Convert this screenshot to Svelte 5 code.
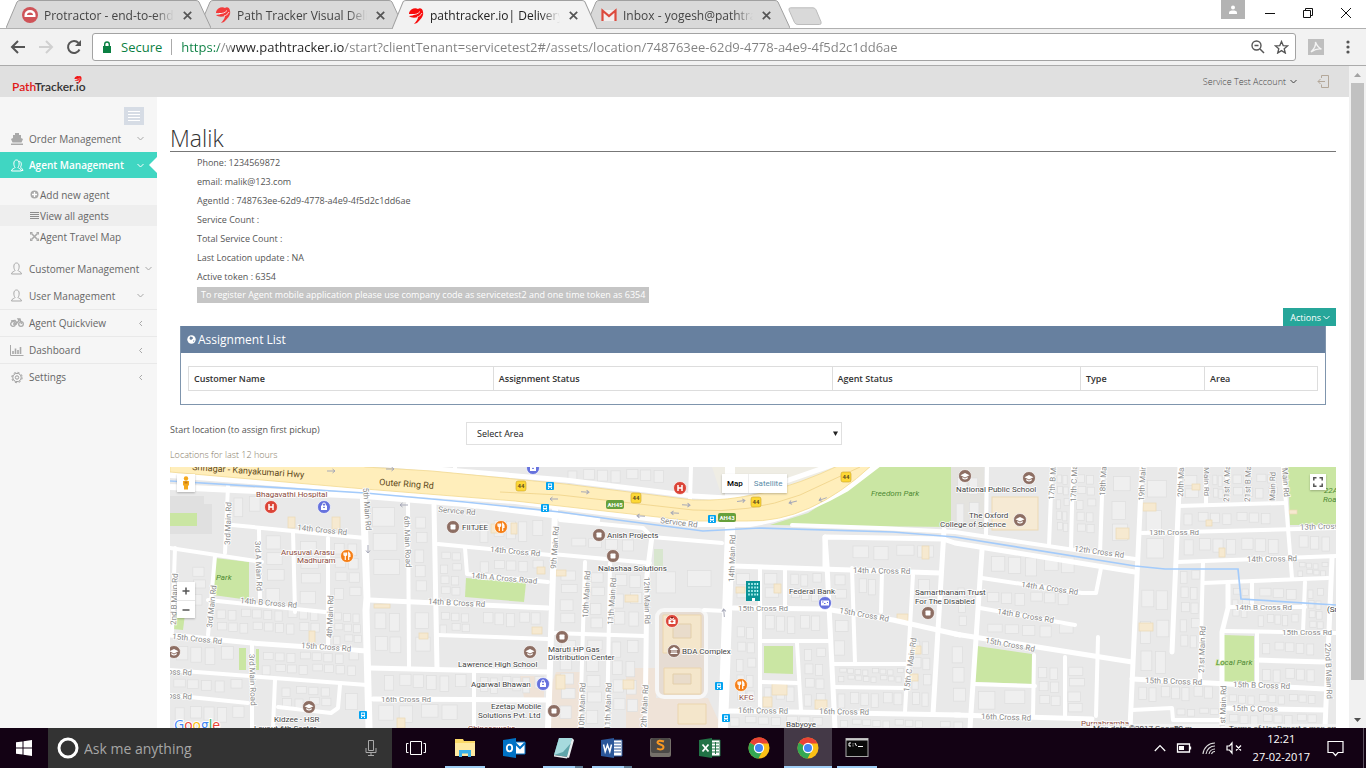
<script>
  const tabs = [
    { icon: 'protractor', title: 'Protractor - end-to-end testing' },
    { icon: 'path', title: 'Path Tracker Visual Delivery' },
    { icon: 'path', title: 'pathtracker.io| Delivery Planner', active: true },
    { icon: 'gmail', title: 'Inbox - yogesh@pathtracker.io' }
  ];

  const details = [
    'Phone: 1234569872',
    'email: malik@123.com',
    'AgentId : 748763ee-62d9-4778-a4e9-4f5d2c1dd6ae',
    'Service Count :',
    'Total Service Count :',
    'Last Location update : NA',
    'Active token : 6354'
  ];

  const columns = ['Customer Name', 'Assignment Status', 'Agent Status', 'Type', 'Area'];

  // Streets as [width, points]
  const roads = [
    [4, '228,486 225,553'], [4, '215,556 208,635'], [4, '232,525 365,538'], [4, '170,548 262,562'],
    [4, '175,548 172,632'], [4, '259,530 260,600'], [4, '293,531 295,612'], [4, '328,538 328,646'],
    [7, '363,486 367,598 366,610 369,728'], [4, '208,600 325,612'], [5, '170,635 252,643 367,651'],
    [4, '170,670 367,685'], [4, '170,695 248,703'], [4, '252,645 252,728'], [4, '275,680 273,728'],
    [4, '278,707 331,713 338,708 340,685'], [4, '408,503 409,667'], [5, '434,505 437,668'],
    [4, '438,544 550,555'], [4, '465,548 467,574 548,582'], [5, '369,600 548,608'], [4, '438,635 548,639'],
    [5, '370,668 548,672'], [5, '373,699 548,700'], [4, '474,673 474,728'], [6, '555,510 548,728'],
    [4, '455,467 455,474'], [4, '560,520 643,528 652,537 722,543'], [5, '652,536 647,575 645,728'],
    [4, '552,554 650,563'], [4, '585,562 580,728'], [4, '610,563 607,728'], [4, '552,633 645,636'],
    [4, '704,610 726,611'], [5, '733,566 940,573'], [4, '760,568 760,710'], [4, '785,568 785,608'],
    [5, '733,608 825,609 893,620 960,635'], [5, '825,569 825,537 943,539 955,543 1135,572'],
    [5, '825,537 827,565 835,728'], [4, '852,568 855,663'], [4, '882,572 881,612'], [4, '833,664 907,664'],
    [4, '833,687 907,688'], [4, '913,575 905,712'], [5, '944,530 933,714'], [5, '730,711 960,715'],
    [4, '760,641 828,641'], [4, '760,682 798,683'], [4, '797,643 801,711'],
    [4, '792,525 880,528 955,532 1135,559'], [4, '691,467 690,500'], [4, '987,467 986,535'],
    [4, '1052,467 1049,546'], [4, '1073,467 1071,548'], [4, '1103,467 1100,554'], [5, '1142,467 1130,728'],
    [5, '1180,467 1172,652'], [4, '1178,506 1285,503'], [4, '1206,467 1206,505'], [4, '1227,467 1227,478'],
    [4, '1283,467 1286,503 1292,578'], [4, '1142,533 1336,528'], [4, '1177,562 1336,556'],
    [4, '1203,562 1200,680'], [4, '1203,583 1328,578'], [5, '1332,558 1325,728'],
    [5, '1228,585 1228,608 1222,632 1222,728'], [4, '1228,607 1305,607'], [4, '1252,582 1252,603'],
    [4, '1305,582 1303,632'], [4, '1223,631 1336,633'], [4, '1257,633 1257,682'], [5, '1257,660 1325,662'],
    [5, '1132,679 1325,689'], [5, '1223,708 1325,710'], [4, '1132,710 1172,708 1173,720 1222,720'],
    [5, '982,550 970,728'], [4, '982,578 1082,593 1096,593 1101,568'], [4, '980,608 1075,625'],
    [5, '955,634 1132,662'], [4, '973,684 1035,686'], [4, '1034,655 1033,717'], [4, '1065,657 1065,718'],
    [4, '1098,637 1096,716'], [5, '955,715 1092,719']
  ];

  const parks = [
    '170,513 197,513 197,526 170,526', '215,558 249,562 249,600 213,595', '239,648 246,648 246,670 239,670',
    '256,649 259,649 259,670 256,670', '175,612 185,614 183,630 173,629', '466,578 526,583 524,602 465,597',
    '764,646 793,646 793,674 764,673', '870,467 951,467 951,527 770,525 808,513 845,489',
    '977,646 1032,654 1032,684 975,682', '1224,635 1254,636 1254,682 1224,682',
    '1288,467 1336,467 1336,525 1290,525'
  ];

  // Built-up blocks as [x, y, width, height, columns, rows]
  const blocks = [
    [234, 496, 28, 24, 2, 1], [266, 534, 22, 70, 1, 4], [300, 540, 24, 66, 1, 4], [334, 542, 28, 60, 2, 4],
    [192, 566, 16, 40, 1, 3], [216, 609, 106, 26, 9, 2], [333, 612, 30, 34, 3, 3], [175, 646, 60, 22, 4, 1],
    [262, 652, 98, 24, 8, 2], [172, 679, 72, 14, 5, 1], [282, 686, 52, 22, 4, 2], [175, 706, 70, 20, 5, 1],
    [345, 692, 18, 22, 1, 1], [372, 506, 32, 80, 1, 3], [415, 516, 14, 80, 1, 5], [374, 612, 30, 48, 2, 2],
    [414, 612, 18, 50, 1, 2], [440, 612, 32, 22, 3, 2], [482, 612, 60, 18, 5, 1], [440, 552, 22, 46, 2, 4],
    [480, 520, 64, 26, 5, 1], [480, 560, 64, 14, 5, 1], [384, 674, 84, 20, 6, 1], [480, 676, 64, 20, 6, 1],
    [378, 704, 84, 22, 4, 1], [560, 570, 20, 56, 1, 4], [590, 572, 16, 60, 1, 4], [614, 574, 30, 54, 2, 3],
    [560, 640, 18, 80, 1, 5], [586, 640, 18, 86, 1, 5], [612, 640, 28, 78, 2, 4], [656, 570, 60, 28, 2, 1],
    [736, 572, 20, 30, 1, 2], [764, 572, 18, 30, 1, 2], [790, 573, 32, 30, 3, 2], [834, 574, 14, 30, 1, 2],
    [858, 578, 20, 22, 2, 1], [764, 615, 58, 22, 5, 1], [834, 620, 16, 38, 1, 2], [838, 668, 66, 14, 8, 2],
    [838, 692, 66, 18, 6, 1], [764, 686, 32, 22, 3, 1], [804, 648, 22, 60, 2, 4], [918, 578, 16, 26, 1, 1],
    [912, 640, 20, 68, 2, 4], [852, 545, 86, 18, 4, 1], [736, 626, 20, 80, 2, 5], [990, 556, 88, 24, 5, 1],
    [986, 592, 86, 16, 6, 1], [986, 624, 90, 14, 5, 1], [958, 586, 10, 44, 1, 3], [952, 645, 16, 64, 1, 3],
    [978, 690, 50, 24, 2, 1], [1038, 666, 24, 44, 2, 3], [1068, 666, 20, 48, 1, 4], [1056, 474, 13, 60, 2, 5],
    [1076, 474, 20, 62, 2, 5], [1112, 476, 22, 70, 1, 3], [1146, 480, 24, 86, 1, 3], [1140, 590, 30, 90, 2, 3],
    [1184, 512, 90, 14, 7, 1], [1184, 538, 98, 20, 7, 1], [1180, 570, 20, 80, 2, 5], [1184, 474, 18, 28, 1, 2],
    [1212, 474, 12, 28, 2, 2], [1232, 474, 46, 26, 4, 2], [1298, 535, 36, 18, 3, 1], [1298, 562, 30, 14, 4, 2],
    [1232, 588, 18, 30, 2, 3], [1258, 588, 42, 14, 3, 1], [1308, 588, 16, 44, 2, 4], [1258, 614, 40, 14, 5, 1],
    [1262, 642, 56, 14, 5, 1], [1262, 668, 56, 16, 5, 1], [1138, 686, 76, 18, 7, 1], [1176, 708, 44, 9, 4, 1],
    [1228, 694, 90, 11, 9, 1], [1228, 714, 90, 12, 8, 1], [956, 477, 24, 50, 2, 2], [570, 538, 70, 14, 4, 1],
    [568, 469, 100, 16, 7, 1], [730, 716, 96, 11, 7, 1], [840, 719, 86, 9, 8, 1], [940, 720, 28, 8, 2, 1]
  ];

  const buildings = blocks.flatMap(([x, y, w, h, nx, ny], b) => {
    const out = [];
    for (let i = 0; i < nx; i++) {
      for (let j = 0; j < ny; j++) {
        const r = ((b * 31 + i * 17 + j * 23) % 10) / 10;
        const cw = w / nx;
        const ch = h / ny;
        out.push({ x: x + i * cw + r * 2, y: y + j * ch + (1 - r) * 2, w: Math.max(3, cw * (0.62 + r * 0.2)), h: Math.max(3, ch * (0.78 - r * 0.25)) });
      }
    }
    return out;
  });

  const shops = [
    [288, 517, 7, 11], [332, 517, 8, 12], [309, 631, 6, 12], [374, 604, 16, 4], [419, 633, 9, 6], [537, 567, 8, 7],
    [532, 627, 10, 7], [491, 524, 8, 9], [511, 523, 6, 11], [397, 718, 8, 10], [556, 570, 10, 6], [625, 595, 13, 7],
    [736, 587, 9, 6], [774, 584, 7, 9], [815, 700, 12, 9], [763, 697, 9, 10], [772, 684, 15, 11], [897, 614, 11, 7],
    [913, 646, 8, 8], [910, 674, 8, 7], [922, 546, 7, 13], [623, 680, 11, 9], [1143, 503, 13, 8], [1116, 528, 13, 11],
    [1139, 623, 14, 8], [1192, 484, 8, 6], [1206, 520, 6, 6], [1219, 548, 6, 9], [1289, 510, 8, 4], [556, 675, 9, 14]
  ];

  const streetNames = [
    [297, 530, 6, '14th Cross Rd'], [240, 603, 5, '14th B Cross Rd'], [172, 639, 6, '15th Cross Rd'],
    [301, 648, 4, '15th Cross Rd'], [230, 545, -88, '3rd Main Rd'], [255, 541, 88, '3rd A Main Rd'],
    [212, 628, -84, '3rd Main Rd'], [332, 638, -88, '4th Main Rd'], [249, 654, 88, '3rd Main Road'],
    [176, 625, -88, '2nd B Main Rd'], [363, 488, 86, '5th Main Rd'], [404, 516, 88, '6th Main Road'],
    [438, 512, 5, 'Service Rd'], [490, 552, 5, '14th Cross Rd'], [471, 578, 5, '14th A Cross Road'],
    [428, 604, 3, '14th B Cross Rd'], [381, 702, 0, '16th Cross Rd'], [165, 674, 3, 'ross Rd', 1],
    [165, 698, 3, 'ross Rd', 1], [556, 569, -86, '9th Main Rd'], [588, 618, -87, '10th Main Rd'],
    [613, 625, -86, '11th Main Rd'], [644, 577, 89, '12th Main Rd'], [584, 730, -88, '10th Main Rd'],
    [610, 730, -88, '11th Main Rd'], [646, 732, -87, '12th Main Rd'], [660, 523, 7, 'Service Rd'],
    [734, 582, -88, '14th Main Rd'], [738, 611, 0, '15th Cross Rd'], [839, 613, 10, '15th Cross Rd'],
    [853, 573, 1, '14th A Cross Rd'], [909, 692, -82, '15th C Main Rd'], [738, 713, 1, '16th Cross Rd'],
    [819, 714, 1, '16th Cross Rd'], [1054, 500, -86, '17th B Main Rd'], [1076, 502, -88, '17th C Main Rd'],
    [1105, 496, -87, '18th Main Rd'], [1144, 501, -87, '19th Main Rd'], [1183, 497, -88, '20th Main Rd'],
    [1204, 467, 90, 'Main Rd'], [1229, 502, -88, '21st A Main Rd'], [1250, 502, -88, '21st B Main Rd'],
    [1275, 501, -89, 'Main Rd'], [1282, 468, 86, 'Main Rd'], [1074, 551, 8, '12th Cross Rd'],
    [1021, 587, 8, '14th A Cross Rd'], [997, 614, 9, '14th B Cross Rd'], [985, 643, 10, '15th Cross Rd'],
    [1149, 535, 0, '13th Cross Rd'], [1247, 562, -1, '14th Cross Rd'], [1300, 530, -2, '13th Cross Rd'],
    [1235, 610, 0, '14th B Cross Rd'], [1282, 635, 0, '15th Cross Rd'], [1204, 673, -88, '21st Main Rd'],
    [1145, 683, 2, '15th B Cross Rd'], [1233, 687, 2, '15th B Cross Rd'], [1232, 711, 1, '15th C Cross'],
    [1325, 643, 88, '22nd B Main Rd'], [1225, 728, -88, '1st Main Rd'], [981, 719, 2, '16th Cross Rd']
  ];

  const places = [
    [256, 497, 'Bhagavathi Hospital', 'brown'], [281, 555, 'Arusuvai Arasu', 'brown'], [297, 563, 'Madhuram', 'brown'],
    [462, 530, 'FIITJEE'], [458, 667, 'Lawrence High School'], [471, 687, 'Agarwal Bhawan'], [491, 709, 'Ezetap Mobile'],
    [478, 718, 'Solutions Pvt. Ltd'], [274, 722, 'Kidzee - HSR'], [254, 731, 'Layout 6th Sector'], [548, 652, 'Maruti HP Gas'],
    [548, 660, 'Distribution Center'], [607, 538, 'Anish Projects'], [598, 571, 'Nalashaa Solutions'],
    [682, 654, 'BDA Complex'], [739, 700, 'KFC', 'brown'], [789, 594, 'Federal Bank'], [786, 727, 'Babyoye'],
    [915, 595, 'Samarthanam Trust'], [915, 604, 'For The Disabled'], [956, 492, 'National Public School'],
    [969, 518, 'The Oxford'], [940, 527, 'College of Science'], [1081, 726, 'Purnabramha', 'brown'],
    [1327, 612, '(Sri'], [216, 580, 'Park', 'green'], [871, 496, 'Freedom Park', 'green'],
    [1216, 665, 'Local Park', 'green'], [1324, 493, '22A', 'green'], [1323, 502, 'Road', 'green'],
    [468, 731, 'Chinesewoks', 'brown']
  ];

  const pins = [
    [271, 507, 'hospital'], [680, 488, 'hospital'], [672, 621, 'gift'], [324, 507, 'shop'], [533, 468, 'shop'],
    [543, 684, 'shop'], [825, 603, 'bank'], [347, 556, 'food'], [501, 527, 'food'], [741, 685, 'food'],
    [453, 527, 'dot'], [599, 535, 'dot'], [613, 556, 'dot'], [562, 637, 'dot'], [554, 711, 'dot'], [928, 613, 'dot'],
    [530, 652, 'school'], [174, 652, 'school'], [309, 707, 'school'], [965, 476, 'school'], [1029, 478, 'school'],
    [1020, 520, 'school'], [674, 651, 'museum']
  ];
  const pinColor = { hospital: '#db4437', gift: '#db4437', shop: '#6672dd', bank: '#6672dd', food: '#f57f17', dot: '#8d6e63', school: '#8d6e63', museum: '#8d6e63' };

  const buses = [[550, 486], [545, 508], [363, 715], [712, 519], [719, 686], [726, 718]];
  const shields = [[521, 486], [636, 498], [756, 502], [846, 477]];
  const highways = [[615, 505, 'AH45'], [727, 518, 'AH43']];
  const arrows = [[331, 471, 0], [390, 469, 0], [554, 499, 180], [585, 492, 3], [686, 505, 3], [675, 513, 183], [641, 516, 183], [741, 501, -8], [793, 502, 165], [823, 499, 160], [404, 505, 180], [368, 549, 90], [724, 613, -95]];

  const apps = [
    { id: 'explorer', name: 'File Explorer', open: true },
    { id: 'outlook', name: 'Outlook' },
    { id: 'notepad', name: 'Notepad', open: true, many: true },
    { id: 'word', name: 'Word', open: true, many: true },
    { id: 'sublime', name: 'Sublime Text' },
    { id: 'excel', name: 'Excel' },
    { id: 'chrome', name: 'Chrome' },
    { id: 'chrome', name: 'Chrome window', open: true, active: true },
    { id: 'cmd', name: 'Command Prompt', open: true }
  ];
</script>

{#snippet swoosh()}
  <path d="M1 5C2 1 7-1 10 1c2-2 5 0 5 3 1 4-2 7-6 11l-3 1c2-2 4-5 4-7C7 10 3 10 1 8c3 0 5-1 6-2H1z" fill="currentColor" />
  <path d="M4 6.500c3 .3 6-.5 8-3M9 9c2-.5 4-2 5-4" stroke="#fff" stroke-width="1" fill="none" opacity=".8" />
{/snippet}

{#snippet person()}
  <path d="M5 8.500C3.500 6.500 3 1 6.500 1s3 5.500 1.500 7.500c0 1 3.500 1 3.500 3.500H1.500C1.500 9.500 5 9.500 5 8.500z" fill="none" stroke="currentColor" />
{/snippet}

{#snippet chevron(left)}
  <svg class="chev" width="9" height="9" viewBox="0 0 9 9" aria-hidden="true"><path d={left ? 'M6 2L3.500 4.500L6 7' : 'M1.500 3L4.500 6L7.500 3'} fill="none" stroke="currentColor" /></svg>
{/snippet}

<div class="screen">
  <header class="tabstrip">
    {#each tabs as tab}
      <div class="tab" class:active={tab.active}>
        <svg class="tabshape" viewBox="0 0 205 28" preserveAspectRatio="none" aria-hidden="true"><path d="M0 28L11 2Q12 .5 14 .5H190Q192 .5 193 2L205 28" stroke="#a0a0a0" fill={tab.active ? '#f2f2f2' : '#d9d9d9'} /></svg>
        <svg class="favicon" width="16" height="16" viewBox="0 0 16 16" aria-hidden="true">
          {#if tab.icon === 'protractor'}
            <circle cx="8" cy="8" r="8" fill="#cf5358" /><path d="M2.500 10V8a5.500 5 0 0 1 11 0v2z" fill="#fff" /><path d="M5 8a3 2.500 0 0 1 6 0z" fill="#cf5358" />
          {:else if tab.icon === 'path'}
            <g color={tab.active ? '#f80c0c' : '#f23c3c'}>{@render swoosh()}</g>
          {:else}
            <path d="M1 3h14v11H1z" fill="#f3eeee" /><path d="M1.500 14V3.500L8 9l6.500-5.500V14" fill="none" stroke="#dd4b3e" stroke-width="2.200" />
          {/if}
        </svg>
        <span class="tabtitle">{tab.title}</span>
        <button class="tabclose" aria-label="Close tab"><svg width="9" height="9" viewBox="0 0 9 9"><path d="M.8.8l7.400 7.400M8.200.8L.8 8.200" stroke="#555" stroke-width="1.700" /></svg></button>
      </div>
    {/each}
    <button class="newtab" aria-label="New tab"><svg width="36" height="19" viewBox="0 0 36 19"><path d="M3.500.8H26q2 0 3 2l5 12q.8 2.700-1.500 2.700H11q-2.500 0-3.500-2L2 3Q1.500.8 3.500.8z" fill="#d9d9d9" stroke="#bcbcbc" /></svg></button>
    <div class="winctl">
      <button class="profile" aria-label="Profile"><svg width="10" height="10" viewBox="0 0 10 10"><circle cx="5" cy="2.500" r="2" fill="#fff" /><path d="M1 9V7.500C1 6 3 5.500 5 5.500s4 .5 4 2V9z" fill="#fff" /></svg></button>
      <button aria-label="Minimize"><svg width="12" height="12" viewBox="0 0 12 12"><path d="M1 6.500h10" stroke="#111" /></svg></button>
      <button aria-label="Restore"><svg width="12" height="12" viewBox="0 0 12 12"><path d="M1.500 3.500h7v7h-7zM3.500 3.500v-2h7v7h-2" fill="none" stroke="#111" /></svg></button>
      <button aria-label="Close window"><svg width="12" height="12" viewBox="0 0 12 12"><path d="M1 1l10 10M11 1L1 11" stroke="#111" /></svg></button>
    </div>
  </header>

  <div class="toolbar">
    <button aria-label="Back"><svg width="16" height="16" viewBox="0 0 16 16"><path d="M15 8H2.500M8 2L2 8l6 6" fill="none" stroke="#555" stroke-width="2" /></svg></button>
    <button aria-label="Forward"><svg width="16" height="16" viewBox="0 0 16 16"><path d="M1 8h12.500M8 2l6 6-6 6" fill="none" stroke="#d0d0d0" stroke-width="2" /></svg></button>
    <button aria-label="Reload"><svg width="16" height="16" viewBox="0 0 16 16"><path d="M13.500 10.500A6 6 0 1 1 12.500 4" fill="none" stroke="#555" stroke-width="2" /><path d="M15 1v6H9z" fill="#555" /></svg></button>
    <div class="omnibox">
      <svg width="10" height="13" viewBox="0 0 10 13" aria-hidden="true"><rect x="1" y="5" width="8" height="7" fill="#0b8043" /><path d="M2.700 5.500V3.200a2.300 2.200 0 0 1 4.600 0v2.300" fill="none" stroke="#0b8043" stroke-width="1.400" /></svg>
      <span class="secure">Secure</span>
      <input class="url" aria-label="Address" value="https://www.pathtracker.io/start?clientTenant=servicetest2#/assets/location/748763ee-62d9-4778-a4e9-4f5d2c1dd6ae" />
      <button aria-label="Zoom"><svg width="14" height="14" viewBox="0 0 14 14"><circle cx="5.500" cy="5.500" r="4.500" fill="none" stroke="#555" stroke-width="1.400" /><path d="M3.500 5.500h4M9 9l4 4" stroke="#555" stroke-width="1.500" /></svg></button>
      <button aria-label="Bookmark"><svg width="15" height="14" viewBox="0 0 15 14"><path d="M7.500 1.500l1.700 4.100 4.400.3-3.400 2.800 1.100 4.300-3.800-2.400L3.700 13l1.100-4.300L1.400 5.900l4.400-.3z" fill="none" stroke="#555" stroke-width="1.300" /></svg></button>
    </div>
    <button aria-label="PDF extension"><svg width="16" height="16" viewBox="0 0 16 16"><rect width="16" height="16" fill="#bfbfbf" /><path d="M3 13C6 10 8 6 7.500 3c1.500 4 3 6 6 7-4-.8-7 .5-10.500 3z" fill="none" stroke="#f4f4f4" stroke-width="1.300" /></svg></button>
    <button class="menu" aria-label="Menu"><svg width="4" height="14" viewBox="0 0 4 14"><g fill="#555"><circle cx="2" cy="2" r="1.600" /><circle cx="2" cy="7" r="1.600" /><circle cx="2" cy="12" r="1.600" /></g></svg></button>
  </div>

  <div class="viewport">
    <div class="page">
      <div class="topbar">
        <a class="brand" href="#home" aria-label="PathTracker.io home">
          <span><b>Path</b>Tracker.io</span>
          <svg class="brandmark" width="8" height="8" viewBox="0 0 16 16" color="#f01515" aria-hidden="true">{@render swoosh()}</svg>
        </a>
        <button class="account">Service Test Account {@render chevron(false)}</button>
        <button class="logout" aria-label="Log out"><svg width="12" height="13" viewBox="0 0 12 13"><path d="M4.500 3V.5h7v12h-7V9.500M8 6.500H1M3.500 4L1 6.500 3.500 9" fill="none" stroke="#b3a799" /></svg></button>
      </div>
      <div class="columns">
        <nav class="sidebar">
          <button class="toggle" aria-label="Toggle sidebar"><svg width="12" height="10" viewBox="0 0 12 10"><path d="M0 .5h12M0 3.500h12M0 6.500h12M0 9.500h12" stroke="#fff" /></svg></button>
          <a class="item" href="#orders">
            <svg width="14" height="12" viewBox="0 0 14 12" aria-hidden="true"><path d="M5 0h4v2h2v3l2 1-1.500 3.500h-9L1 6l2-1V2h2zM1 10.500h12V12H1z" fill="#a9a9a9" /></svg>
            <span>Order Management</span>{@render chevron(false)}
          </a>
          <a class="item current" href="#agents">
            <svg width="14" height="13" viewBox="0 0 14 13" aria-hidden="true">{@render person()}<path d="M8.500 2.500c3-1 3.500 3.500 2 5.500 0 1 2 1 2.500 3.500h-2" fill="none" stroke="currentColor" /></svg>
            <span>Agent Management</span>{@render chevron(false)}
          </a>
          <div class="submenu">
            <a href="#add"><svg width="9" height="9" viewBox="0 0 9 9" aria-hidden="true"><circle cx="4.500" cy="4.500" r="4" fill="#a9a9a9" /><path d="M4.500 2v5M2 4.500h5" stroke="#fff" stroke-width="1.300" /></svg><span>Add new agent</span></a>
            <a href="#view" class="hover"><svg width="9" height="9" viewBox="0 0 9 9" aria-hidden="true"><path d="M0 1.500h9M0 3.500h9M0 5.500h9M0 7.500h9" stroke="#8d8d8d" /></svg><span>View all agents</span></a>
            <a href="#travel"><svg width="9" height="9" viewBox="0 0 9 9" aria-hidden="true"><path d="M1.500 1.500l6 6M7.500 1.500l-6 6" stroke="#a9a9a9" stroke-width="1.600" /><path d="M0 0h3L0 3zM9 0v3L6 0zM0 9V6l3 3zM9 9H6l3-3z" fill="#a9a9a9" /></svg><span>Agent Travel Map</span></a>
          </div>
          <a class="item" href="#customers">
            <svg width="14" height="13" viewBox="0 0 14 13" aria-hidden="true">{@render person()}</svg>
            <span>Customer Management</span>{@render chevron(false)}
          </a>
          <a class="item" href="#users">
            <svg width="14" height="13" viewBox="0 0 14 13" aria-hidden="true">{@render person()}</svg>
            <span>User Management</span>{@render chevron(false)}
          </a>
          <a class="item ruled" href="#quick">
            <svg width="14" height="10" viewBox="0 0 14 10" aria-hidden="true"><g fill="none" stroke="#a9a9a9" stroke-width="1.300"><circle cx="3" cy="6" r="2.300" /><circle cx="11" cy="6" r="2.300" /><path d="M1 3l4-.5 2 2.500 2-2.500L8 1h2l1.500 5M3 6h4" /></g></svg>
            <span>Agent Quickview</span>{@render chevron(true)}
          </a>
          <a class="item ruled" href="#dashboard">
            <svg width="14" height="11" viewBox="0 0 14 11" aria-hidden="true"><path d="M.5 0v10.500H13.500" fill="none" stroke="#a9a9a9" /><path d="M3 9V6M5.500 9V3.500M8 9V5M10.500 9V2" stroke="#a9a9a9" stroke-width="1.600" /></svg>
            <span>Dashboard</span>{@render chevron(true)}
          </a>
          <a class="item ruled" href="#settings">
            <svg width="14" height="13" viewBox="0 0 14 13" aria-hidden="true"><g fill="none" stroke="#9c9c9c"><circle cx="7" cy="6.500" r="4.200" /><circle cx="7" cy="6.500" r="1.700" /><circle cx="7" cy="6.500" r="5.200" stroke-dasharray="2 2.080" /></g></svg>
            <span>Settings</span>{@render chevron(true)}
          </a>
        </nav>

        <main>
          <h1>Malik</h1>
          <ul class="details">
            {#each details as line}<li>{line}</li>{/each}
          </ul>
          <p class="note">To register Agent mobile application please use company code as servicetest2 and one time token as 6354</p>
          <div class="actions"><button>Actions {@render chevron(false)}</button></div>
          <section class="panel">
            <h2>
              <svg width="9" height="9" viewBox="0 0 9 9" aria-hidden="true"><circle cx="4.500" cy="4.500" r="4.200" fill="#fff" /><path d="M3 1.500l2.500.5.5 1.500-2 1.500-1.500-1zM6 5.500l1.500 0-1 1.500z" fill="#67809f" /></svg>
              Assignment List
            </h2>
            <table>
              <colgroup><col class="c1" /><col class="c2" /><col class="c3" /><col class="c4" /><col class="c5" /></colgroup>
              <thead><tr>{#each columns as c}<th scope="col">{c}</th>{/each}</tr></thead>
            </table>
          </section>
          <div class="startrow">
            <label for="area">Start location (to assign first pickup)</label>
            <div class="selectbox">
              <select id="area"><option>Select Area</option></select>
              <svg width="5" height="5" viewBox="0 0 5 5" aria-hidden="true"><path d="M0 .5h5L2.500 5z" fill="#222" /></svg>
            </div>
          </div>
          <p class="hours">Locations for last 12 hours</p>

          <div class="map">
            <svg class="canvas" viewBox="170 467 1166 261" preserveAspectRatio="xMinYMin slice" role="img" aria-label="Street map">
              <rect x="170" y="467" width="1166" height="300" fill="#e9e9e9" />
              <path d="M712 467h126q-50 36-98 33h-17z" fill="#efede4" />
              <path d="M948 467h36v62l-34-4z" fill="#e4e3df" />
              <path d="M170 496h34v8h8v30h-42z" fill="#e0e0e0" />
              <path d="M556 672h26v56h-36v-30zM626 668h30v30h52l14 30H626zM520 676h24v22h-20z" fill="#efe3d8" />
              {#each parks as p}<polygon points={p} fill="#cae6a3" />{/each}
              <rect x="654" y="549" width="9" height="17" fill="#d8e6cf" />
              {#each buildings as b}<rect x={b.x} y={b.y} width={b.w} height={b.h} fill="#efefef" stroke="#dedede" stroke-width=".7" />{/each}
              {#each shops as s}<rect x={s[0]} y={s[1]} width={s[2]} height={s[3]} fill="#f6e9d0" stroke="#ecd9b5" stroke-width=".7" />{/each}
              <rect x="992" y="497" width="46" height="33" fill="#f6ead4" stroke="#ecd9b5" />
              <rect x="657" y="610" width="49" height="87" rx="7" fill="#e6dcd3" stroke="#f7f7f7" stroke-width="4" />
              <path d="M663 615h38v38h-38zM664 668h37v26h-37zM678 704h28v20h-28z" fill="#f4e6cb" stroke="#ebd5ae" />
              <path d="M673 624h18v14h-18zM673 674h18v10h-18z" fill="#e9dccb" stroke="#e3cfaa" />
              {#each roads as r}<polyline points={r[1]} fill="none" stroke="#fff" stroke-width={r[0]} stroke-linecap="round" stroke-linejoin="round" />{/each}
              <path d="M170 487L365 496L465 504L560 516L600 521" stroke="#fff" stroke-width="6" fill="none" />
              <path d="M730 467V530L723 728" stroke="#fff" stroke-width="10" fill="none" />
              <path d="M365 463L565 480L693 496L727 498L780 483L838 463" fill="none" stroke="#fff" stroke-width="5" />
              <path d="M170 475L365 490L515 501L693 524L750 524Q800 516 846 489L880 463" fill="none" stroke="#fff" stroke-width="6" />
              <path d="M170 481L365 493L465 502L560 512L610 519L703 531L760 528L893 532L955 537L1135 566L1165 569H1238L1241 599L1336 605" fill="none" stroke="#a3cbfb" stroke-width="1.700" />
              <path d="M170 460H350L365 467L432 471L565 484L693 500Q760 503 840 465L872 465Q810 523 747 521L693 521L560 506L515 501L365 489L170 472z" fill="#ffeebb" stroke="#f3d991" stroke-width=".8" />
              <path d="M500 492L560 495L693 510Q750 514 800 495L860 467" fill="none" stroke="#efd288" stroke-width=".8" />
              {#each arrows as a}<path d="M-4 0H4M1.500-2L4 0L1.500 2" transform="translate({a[0]} {a[1]}) rotate({a[2]})" fill="none" stroke="#a7a9b8" stroke-width="1" />{/each}
              <g class="street">
                {#each streetNames as s}<text transform="translate({s[0]} {s[1]}) rotate({s[2]})">{s[3]}</text>{/each}
              </g>
              <g class="hwy">
                <text transform="translate(192 470) rotate(4)">Srinagar - Kanyakumari Hwy</text>
                <text transform="translate(379 485) rotate(4)">Outer Ring Rd</text>
              </g>
              {#each shields as s}
                <rect x={s[0] - 5} y={s[1] - 5} width="10" height="10" rx="2" fill="#fdd835" stroke="#caa22a" stroke-width=".6" />
                <text class="shield" x={s[0]} y={s[1] + 2}>44</text>
              {/each}
              {#each highways as h}
                <rect x={h[0] - 9} y={h[1] - 5} width="18" height="9" rx="2" fill="#66a03c" />
                <text class="shield light" x={h[0]} y={h[1] + 2}>{h[2]}</text>
              {/each}
              {#each buses as b}
                <g transform="translate({b[0] - 4} {b[1] - 4})"><rect width="8" height="8" rx="1" fill="#03a3f0" /><path d="M2 1.500h4v4H2zM2 6h1v1H2zM5 6h1v1H5z" fill="#fff" /><path d="M2.700 2.500h2.600v1.500H2.700z" fill="#03a3f0" /></g>
              {/each}
              {#each pins as p}
                <g transform="translate({p[0]} {p[1]})">
                  <circle r="6.500" fill={pinColor[p[2]]} stroke="#fff" stroke-width=".7" />
                  {#if p[2] === 'hospital'}<path d="M-2-3v6M2-3v6M-2 0h4" stroke="#fff" stroke-width="1.500" />
                  {:else if p[2] === 'gift'}<path d="M-3.500-1.500h7V3h-7z" fill="#fff" /><path d="M0-1v3M-1.500.5h3M-2-3.500L0-2l2-1.500" stroke="#db4437" stroke-width="1" /><path d="M-2-3L0-1.500 2-3" stroke="#fff" fill="none" />
                  {:else if p[2] === 'shop'}<path d="M-3-1.500h6V3h-6z" fill="#fff" /><path d="M-1.500-1v-1.500a1.500 1.500 0 0 1 3 0V-1" fill="none" stroke="#fff" /><path d="M-1 0Q0 1.500 1 0" stroke="#6672dd" fill="none" />
                  {:else if p[2] === 'bank'}<path d="M-4-2.500h8v5h-8z" fill="#fff" /><path d="M-3-1h1.500M-1 .5h1.500M2-.5h1" stroke="#6672dd" />
                  {:else if p[2] === 'food'}<path d="M-1.700 4V-3.500M-3-3.500v2.500q1.300 1 2.600 0v-2.500M1.700 4V-3.500Q3.500-2 3 .5H1.700" stroke="#fff" fill="none" stroke-width="1.200" />
                  {:else if p[2] === 'dot'}<rect x="-2.500" y="-2.500" width="5" height="5" rx=".7" fill="#fff" />
                  {:else if p[2] === 'school'}<path d="M-4.500-.8L0-3l4.500 2.200L0 1.500zM-2.700 1v1.500Q0 4.500 2.700 2.500V1L0 2.400z" fill="#fff" />
                  {:else}<path d="M-3.500-1.500L0-3.500l3.500 2zM-3.500 2.500h7M-2-.8V2M0-.8V2M2-.8V2" fill="#fff" stroke="#fff" />{/if}
                </g>
              {/each}
              <g transform="translate(746 581)"><path d="M0 0h14v20H0z" fill="#0a9396" /><path d="M3 2v14M6 2v14M9 2v14M11.500 2v14" stroke="#c9ffff" stroke-width="1.400" stroke-dasharray="2 1.500" /><path d="M6 17h3v3H6z" fill="#fff" /></g>
              <g class="place">
                {#each places as p}<text x={p[0]} y={p[1]} class={p[3] || 'dark'}>{p[2]}</text>{/each}
              </g>
              <text class="glogo" x="174" y="730"><tspan fill="#4285f4">G</tspan><tspan fill="#ea4335">o</tspan><tspan fill="#fbbc05">o</tspan><tspan fill="#4285f4">g</tspan><tspan fill="#34a853">l</tspan><tspan fill="#ea4335">e</tspan></text>
              <rect x="1090" y="724" width="246" height="10" fill="#f5f5f5" opacity=".75" />
              <text class="credit" x="1093" y="731">Map data ©2017 Google</text>
              <text class="credit" x="1174" y="731">50 m</text>
              <text class="credit" x="1229" y="731">Terms of Use</text>
              <text class="credit" x="1277" y="731">Report a map error</text>
            </svg>
            <button class="ctl pegman" aria-label="Street View"><svg width="10" height="14" viewBox="0 0 10 14"><circle cx="5" cy="2.500" r="2.200" fill="#f4a91e" /><path d="M2 5h6v4.500H7V13.500H3V9.500H2z" fill="#f4a91e" /><path d="M3.500 5.500h3v2h-3z" fill="#c97b13" /></svg></button>
            <div class="ctl zoom"><button aria-label="Zoom in"><svg width="8" height="8" viewBox="0 0 8 8"><path d="M4 .5v7M.5 4h7" stroke="#555" stroke-width="1.500" /></svg></button><button aria-label="Zoom out"><svg width="8" height="8" viewBox="0 0 8 8"><path d="M.5 4h7" stroke="#555" stroke-width="1.500" /></svg></button></div>
            <div class="ctl types"><button class="on">Map</button><button>Satellite</button></div>
            <button class="ctl full" aria-label="Full screen"><svg width="10" height="10" viewBox="0 0 10 10"><path d="M.8 3.500V.8h2.700M6.500.8h2.700v2.700M9.200 6.500v2.700H6.500M3.500 9.200H.8V6.500" fill="none" stroke="#555" stroke-width="1.500" /></svg></button>
          </div>
        </main>
      </div>
    </div>
    <div class="scrollbar" aria-hidden="true">
      <svg width="17" height="17" viewBox="0 0 17 17"><path d="M5 11l3.500-4L12 11z" fill="#a3a3a3" /></svg>
      <div class="thumb"></div>
      <div class="rest"></div>
      <svg width="17" height="17" viewBox="0 0 17 17"><path d="M5 7l3.500 4L12 7z" fill="#505050" /></svg>
    </div>
  </div>

  <footer class="taskbar">
    <button class="start" aria-label="Start"><svg width="16" height="16" viewBox="0 0 16 16"><path d="M0 2.300L6.500 1.400V7.500H0zM7.500 1.200L16 0v7.500H7.500zM0 8.500h6.500v6.100L0 13.700zM7.500 8.500H16V16l-8.500-1.200z" fill="#fff" /></svg></button>
    <div class="search">
      <svg width="22" height="22" viewBox="0 0 22 22" aria-hidden="true"><circle cx="11" cy="11" r="9" fill="none" stroke="#fff" stroke-width="3" /></svg>
      <input aria-label="Search" placeholder="Ask me anything" />
      <button aria-label="Speak"><svg width="12" height="18" viewBox="0 0 12 18"><path d="M3.500 1.500h5v10h-5zM1 9v4.500h10V9M6 13.500v3M3 16.500h6" fill="none" stroke="#aaa" /></svg></button>
    </div>
    <div class="apps">
      <button aria-label="Task view"><svg width="20" height="14" viewBox="0 0 20 14"><path d="M4.500 .5h11v13h-11zM2.500 2.500h-2v9h2M17.500 2.500h2v9h-2" fill="none" stroke="#fff" /></svg></button>
      {#each apps as a}
        <button class:open={a.open} class:on={a.active} class:many={a.many} aria-label={a.name}>
          <svg width="24" height="22" viewBox="0 0 24 22">
            {#if a.id === 'explorer'}
              <path d="M2 2h8l1 2h11v15H2z" fill="#fbd968" /><path d="M2 6h20v13H2z" fill="#ffe9a2" /><path d="M6 20v-7h12v7h-3v-3.500H9V20z" fill="#3ab0ea" />
            {:else if a.id === 'outlook'}
              <path d="M13 5h10v12H13z" fill="#fff" stroke="#0072c6" /><path d="M13 6l5 5 5-5" fill="none" stroke="#0072c6" stroke-width="2" /><path d="M1 3l13-2v20L1 19z" fill="#0072c6" /><ellipse cx="7.500" cy="11" rx="2.700" ry="3.300" fill="none" stroke="#fff" stroke-width="1.800" />
            {:else if a.id === 'notepad'}
              <path d="M8 1h13l-4 19-14-2z" fill="#5fa5ab" /><path d="M8 1h13l-1 5-8 9-9 3z" fill="#a6dade" /><path d="M21 1l2 2-5 18-2-1zM3 18l14 2-1 1.500-13-2z" fill="#e9eef0" />
            {:else if a.id === 'word' || a.id === 'excel'}
              <path d="M13 3h9v16h-9z" fill="#fff" stroke={a.id === 'word' ? '#2b579a' : '#217346'} />
              <path d="M14 6h7M14 9h7M14 12h7M14 15h7" stroke={a.id === 'word' ? '#2b579a' : '#217346'} /><path d="M1 3l13-2v20L1 19z" fill={a.id === 'word' ? '#2b579a' : '#217346'} />
              {#if a.id === 'word'}<path d="M3.500 7.500l1.700 7L7.500 8l2.300 6.500 1.700-7" fill="none" stroke="#fff" stroke-width="1.500" />{:else}<path d="M17.500 5v12" stroke="#217346" /><path d="M4.500 7.500l6 7M10.500 7.500l-6 7" stroke="#fff" stroke-width="1.800" />{/if}
            {:else if a.id === 'sublime'}
              <rect x="1" y="1" width="21" height="19" rx="2" fill="#75706a" /><rect x="2" y="1" width="19" height="15" rx="2" fill="#4b4947" /><path d="M15 4.500q-6-2-6.500.7c0 2.500 6 2 6 4.800 0 2.800-4 3-6.500 1.500" fill="none" stroke="#f89822" stroke-width="2" />
            {:else if a.id === 'chrome'}
              <circle cx="12" cy="11" r="10.500" fill="#fbc116" /><path d="M12 11L2.900 5.700A10.500 10.500 0 0 1 21.500 6.500H12z" fill="#ea4335" /><path d="M12 11L2.900 5.700A10.500 10.500 0 0 0 11.500 21.500L16 13z" fill="#34a853" /><circle cx="12" cy="11" r="5.200" fill="#fff" /><circle cx="12" cy="11" r="4" fill="#4285f4" />
            {:else}
              <rect x="1" y="1.500" width="22" height="18" fill="#0a0a0a" stroke="#a9a9a9" /><path d="M1 1.500h22v2H1z" fill="#c9c9c9" /><path d="M6 6H4v3h2M8 6.500v.8M8 8.500v.8M10 6l1.500 3M13 9.500h5" stroke="#fff" fill="none" />
            {/if}
          </svg>
        </button>
      {/each}
    </div>
    <div class="tray">
      <button aria-label="Show hidden icons"><svg width="12" height="8" viewBox="0 0 12 8"><path d="M.8 7L6 1.500 11.200 7" fill="none" stroke="#fff" stroke-width="1.200" /></svg></button>
      <svg width="16" height="10" viewBox="0 0 16 10" aria-hidden="true"><path d="M1.500 1h12v8h-12zM14.500 3.500v3" fill="none" stroke="#fff" stroke-width="1.300" /><path d="M3 3h5v4H3z" fill="#fff" /></svg>
      <svg width="14" height="14" viewBox="0 0 14 14" aria-hidden="true"><g fill="none" stroke="#ddd" stroke-width="1.100"><path d="M1 13A12 12 0 0 1 13 2M4 13a9 9 0 0 1 9-8M7 13a6 6 0 0 1 6-5M9.500 13a3.500 3.500 0 0 1 3.500-2.500" /></g></svg>
      <svg width="16" height="14" viewBox="0 0 16 14" aria-hidden="true"><path d="M1 5h2.500L6 2v10L3.500 9H1zM10 4.500l5 5M15 4.500l-5 5" fill="none" stroke="#fff" stroke-width="1.200" /></svg>
      <div class="clock"><span>12:21</span><span>27-02-2017</span></div>
      <button aria-label="Notifications"><svg width="17" height="17" viewBox="0 0 17 17"><path d="M1 1.500h15v11h-5l-2.500 3-2.500-3H1z" fill="none" stroke="#fff" stroke-width="1.200" /></svg></button>
      <i class="peek"></i>
    </div>
  </footer>
</div>

<style>
  :global(body) { margin: 0; }
  .screen { display: flex; flex-direction: column; height: 100vh; overflow: hidden; font-family: "Open Sans", sans-serif; font-size: 10px; color: #555; background: #fff; }
  button { font: inherit; color: inherit; border: 0; padding: 0; background: none; }
  a { color: inherit; text-decoration: none; }
  svg { display: block; flex: none; }

  .tabstrip { display: flex; align-items: flex-end; height: 28px; padding-left: 6px; border-bottom: 1px solid #b0b0b0; box-sizing: content-box; height: 28px; }
  .tab { position: relative; display: flex; align-items: center; box-sizing: border-box; width: 205px; height: 28px; margin-right: -12px; padding: 2px 16px 0 16px; gap: 6px; font-size: 12px; color: #444; }
  .tab:nth-child(1) { z-index: 2; }
  .tab:nth-child(2) { z-index: 1; }
  .tab.active { z-index: 3; color: #222; height: 29px; margin-bottom: -1px; }
  .tabshape { position: absolute; inset: 0; width: 100%; height: 100%; z-index: -1; }
  .tab:nth-child(4) { z-index: 0; }
  .tabtitle { flex: 1; min-width: 0; overflow: hidden; white-space: nowrap; mask-image: linear-gradient(90deg, #000 85%, transparent); }
  .tabclose { padding: 3px; }
  .newtab { margin-left: 9px; padding-bottom: 2px; }
  .winctl { display: flex; align-self: flex-start; align-items: center; margin-left: auto; padding-right: 14px; gap: 26px; }
  .winctl .profile { display: flex; justify-content: center; align-items: center; width: 24px; height: 19px; margin-right: -7px; align-self: flex-start; background: #b3b3b3; }
  .winctl button { padding-top: 0; }
  .winctl button:not(.profile) { padding-top: 6px; }

  .toolbar { display: flex; align-items: center; gap: 12px; height: 36px; padding: 0 16px 0 10px; background: #f2f2f2; border-bottom: 1px solid #ababab; }
  .omnibox { display: flex; flex: 1; align-items: center; gap: 9px; height: 26px; margin-left: -2px; padding: 0 6px 0 9px; border: 1px solid #a3a3a3; border-radius: 3px; background: #fff; font-size: 13px; }
  .secure { padding-right: 9px; border-right: 1px solid #aaa; color: #0b8043; line-height: 16px; }
  .url { flex: 1; min-width: 0; border: 0; padding: 0; outline: 0; font: inherit; line-height: 20px; background: linear-gradient(90deg, #0b8043 38px, #858585 38px, #858585 51px, #222 51px, #222 163px, #808080 163px); -webkit-background-clip: text; background-clip: text; color: transparent; }
  .menu { padding-left: 10px; }

  .viewport { display: flex; flex: 1; min-height: 0; }
  .page { display: flex; flex-direction: column; flex: 1; min-width: 0; }
  .topbar { display: flex; align-items: center; height: 31px; padding-right: 20px; background: #e0e0e0; }
  .brand { position: relative; margin: 10px auto 0 12px; font: 600 12px/16px Lato, sans-serif; color: #333; }
  .brand b { font-weight: 600; color: #e01818; }
  .brandmark { position: absolute; right: 4px; top: -3px; }
  .account { display: flex; align-items: center; gap: 3px; font-size: 9px; font-weight: 300; color: #444; }
  .logout { margin-left: 19px; }
  .columns { display: flex; flex: 1; min-height: 0; }

  .sidebar { display: flex; flex-direction: column; width: 157px; flex: none; background: #f6f6f6; color: #666; }
  .toggle { display: flex; align-items: center; justify-content: center; align-self: flex-end; width: 20px; height: 18px; flex: none; margin: 10px 13px 0 0; background: #d6dce5; }
  .item { display: flex; align-items: center; gap: 5px; height: 27px; padding: 0 12px 0 10px; box-sizing: border-box; white-space: nowrap; }
  .item span { flex: 1; }
  .item > svg { color: #a9a9a9; }
  .item .chev { margin: 0; }
  .item.ruled { border-top: 1px solid #e9e9e9; }
  .item.current { position: relative; height: 26px; background: #40d6c2; color: #fff; font-weight: 600; }
  .item.current > svg { color: #fff; }
  .item.current::after { content: ""; position: absolute; right: 0; top: 5px; border: 8px solid transparent; border-left: 0; border-right-color: #fff; }
  .submenu { padding: 6px 0 8px; }
  .submenu a { display: flex; align-items: center; gap: 1px; height: 21px; padding-left: 30px; }
  .submenu .hover { background: #eeeeee; }

  main { display: flex; flex-direction: column; flex: 1; min-width: 0; padding: 0 13px; }
  h1 { margin: 0; padding-top: 28px; border-bottom: 1px solid #777; font-size: 23px; line-height: 26px; font-weight: 300; color: #333; }
  .details { margin: 1px 0 0; padding: 0 0 0 27px; list-style: none; font-size: 9px; line-height: 19px; }
  .note { align-self: flex-start; margin: 1px 0 5px 27px; padding: 0 4px; background: #c5c5c5; color: #fff; font-size: 9px; line-height: 16px; }
  .actions { display: flex; justify-content: flex-end; }
  .actions button { display: flex; align-items: center; gap: 1px; height: 18px; padding: 0 5px 0 7px; background: #26a69a; color: #fff; font-size: 9px; }
  .panel { margin: 0 10px; padding-bottom: 13px; border: 1px solid #7f95ad; border-top: 0; }
  h2 { display: flex; align-items: center; gap: 2px; margin: 0 0 13px; padding-left: 6px; height: 27px; background: #67809f; color: #fff; font-size: 12px; font-weight: 400; }
  table { width: calc(100% - 14px); margin: 0 7px; border-collapse: collapse; table-layout: fixed; }
  th { height: 24px; padding: 0 5px; border: 1px solid #ddd; text-align: left; font-size: 9px; font-weight: 600; color: #333; box-sizing: border-box; }
  .c1 { width: 27%; } .c2 { width: 30%; } .c3 { width: 22%; } .c4 { width: 11%; } .c5 { width: 10%; }
  .startrow { display: grid; grid-template-columns: 296px 376px; margin-top: 17px; }
  .startrow label { font-size: 9px; line-height: 16px; }
  .selectbox { position: relative; }
  select { appearance: none; width: 100%; height: 23px; padding: 0 10px; border: 1px solid #e0e0e0; border-radius: 0; background: #fff; font: 9px "Open Sans", sans-serif; color: #222; }
  .selectbox svg { position: absolute; right: 4px; top: 9px; }
  .hours { margin: 3px 0 5px; font-size: 9px; line-height: 14px; font-weight: 300; color: #857a66; }

  .map { position: relative; flex: 1; min-height: 0; overflow: hidden; }
  .canvas { position: absolute; inset: 0; width: 100%; height: 100%; font-family: Roboto, sans-serif; }
  .canvas text { paint-order: stroke; }
  .street text { font-size: 8px; fill: #8a8a8a; stroke: #fff; stroke-width: 1.5px; }
  .hwy text { font-size: 9px; fill: #5f4b1c; stroke: #ffeebb; stroke-width: 1px; }
  .place text { font-size: 8px; stroke: #fff; stroke-width: 1.5px; }
  .place .dark { fill: #444; }
  .place .brown { fill: #8b4a3c; }
  .place .green { fill: #4f8a34; font-style: italic; stroke: #cae6a3; }
  .shield { font-size: 6px; font-weight: 700; text-anchor: middle; fill: #5f4b1c; }
  .shield.light { fill: #fff; }
  .glogo { font: 500 14px "Open Sans", sans-serif; stroke: #fff; stroke-width: 2px; }
  .credit { font-size: 8px; fill: #444; }
  .ctl { position: absolute; display: flex; align-items: center; justify-content: center; background: #fff; box-shadow: 0 1px 2px rgba(0, 0, 0, .25); }
  .pegman { left: 7px; top: 7px; width: 18px; height: 18px; }
  .zoom { left: 7px; top: 115px; width: 18px; flex-direction: column; }
  .zoom button { display: flex; align-items: center; justify-content: center; width: 18px; height: 18px; }
  .zoom button + button { border-top: 1px solid #e6e6e6; }
  .types { left: 552px; top: 7px; height: 19px; font: 8px Roboto, sans-serif; }
  .types button { height: 19px; padding: 0 5px; color: #5b8ca8; }
  .types button + button { border-left: 1px solid #eee; }
  .types .on { color: #000; font-weight: 500; }
  .full { right: 10px; top: 7px; width: 16px; height: 16px; }

  .scrollbar { display: flex; flex-direction: column; width: 17px; background: #f1f1f1; }
  .thumb { flex: 597; margin: 0 2px; background: #c1c1c1; }
  .rest { flex: 31; }

  .taskbar { display: flex; height: 40px; flex: none; background: #130214; color: #fff; }
  .start { display: flex; align-items: center; justify-content: center; width: 48px; }
  .search { display: flex; align-items: center; width: 344px; box-sizing: border-box; padding: 0 15px 0 9px; gap: 5px; background: #333; }
  .search input { flex: 1; min-width: 0; padding: 0; border: 0; outline: 0; background: none; font: 14px "Open Sans", sans-serif; color: #fff; }
  .search input::placeholder { color: #a6a6a6; opacity: 1; }
  .apps { display: flex; gap: 1px; }
  .apps button { position: relative; display: flex; align-items: center; justify-content: center; width: 48px; }
  .apps .on { background: #443947; }
  .apps .open::after { content: ""; position: absolute; left: 4px; right: 4px; bottom: 0; height: 2px; background: #9fcdf5; }
  .apps .on::after { left: 0; right: 0; }
  .apps .many::after { background: linear-gradient(90deg, #9fcdf5 80%, #5f7c94 80%); }
  .tray { display: flex; align-items: center; margin-left: auto; gap: 10px; }
  .clock { display: flex; flex-direction: column; align-items: center; margin: 0 7px 0 1px; font-size: 11px; line-height: 18px; }
  .peek { align-self: stretch; width: 1px; margin: 0 2px 0 9px; background: #5b5060; }
</style>
